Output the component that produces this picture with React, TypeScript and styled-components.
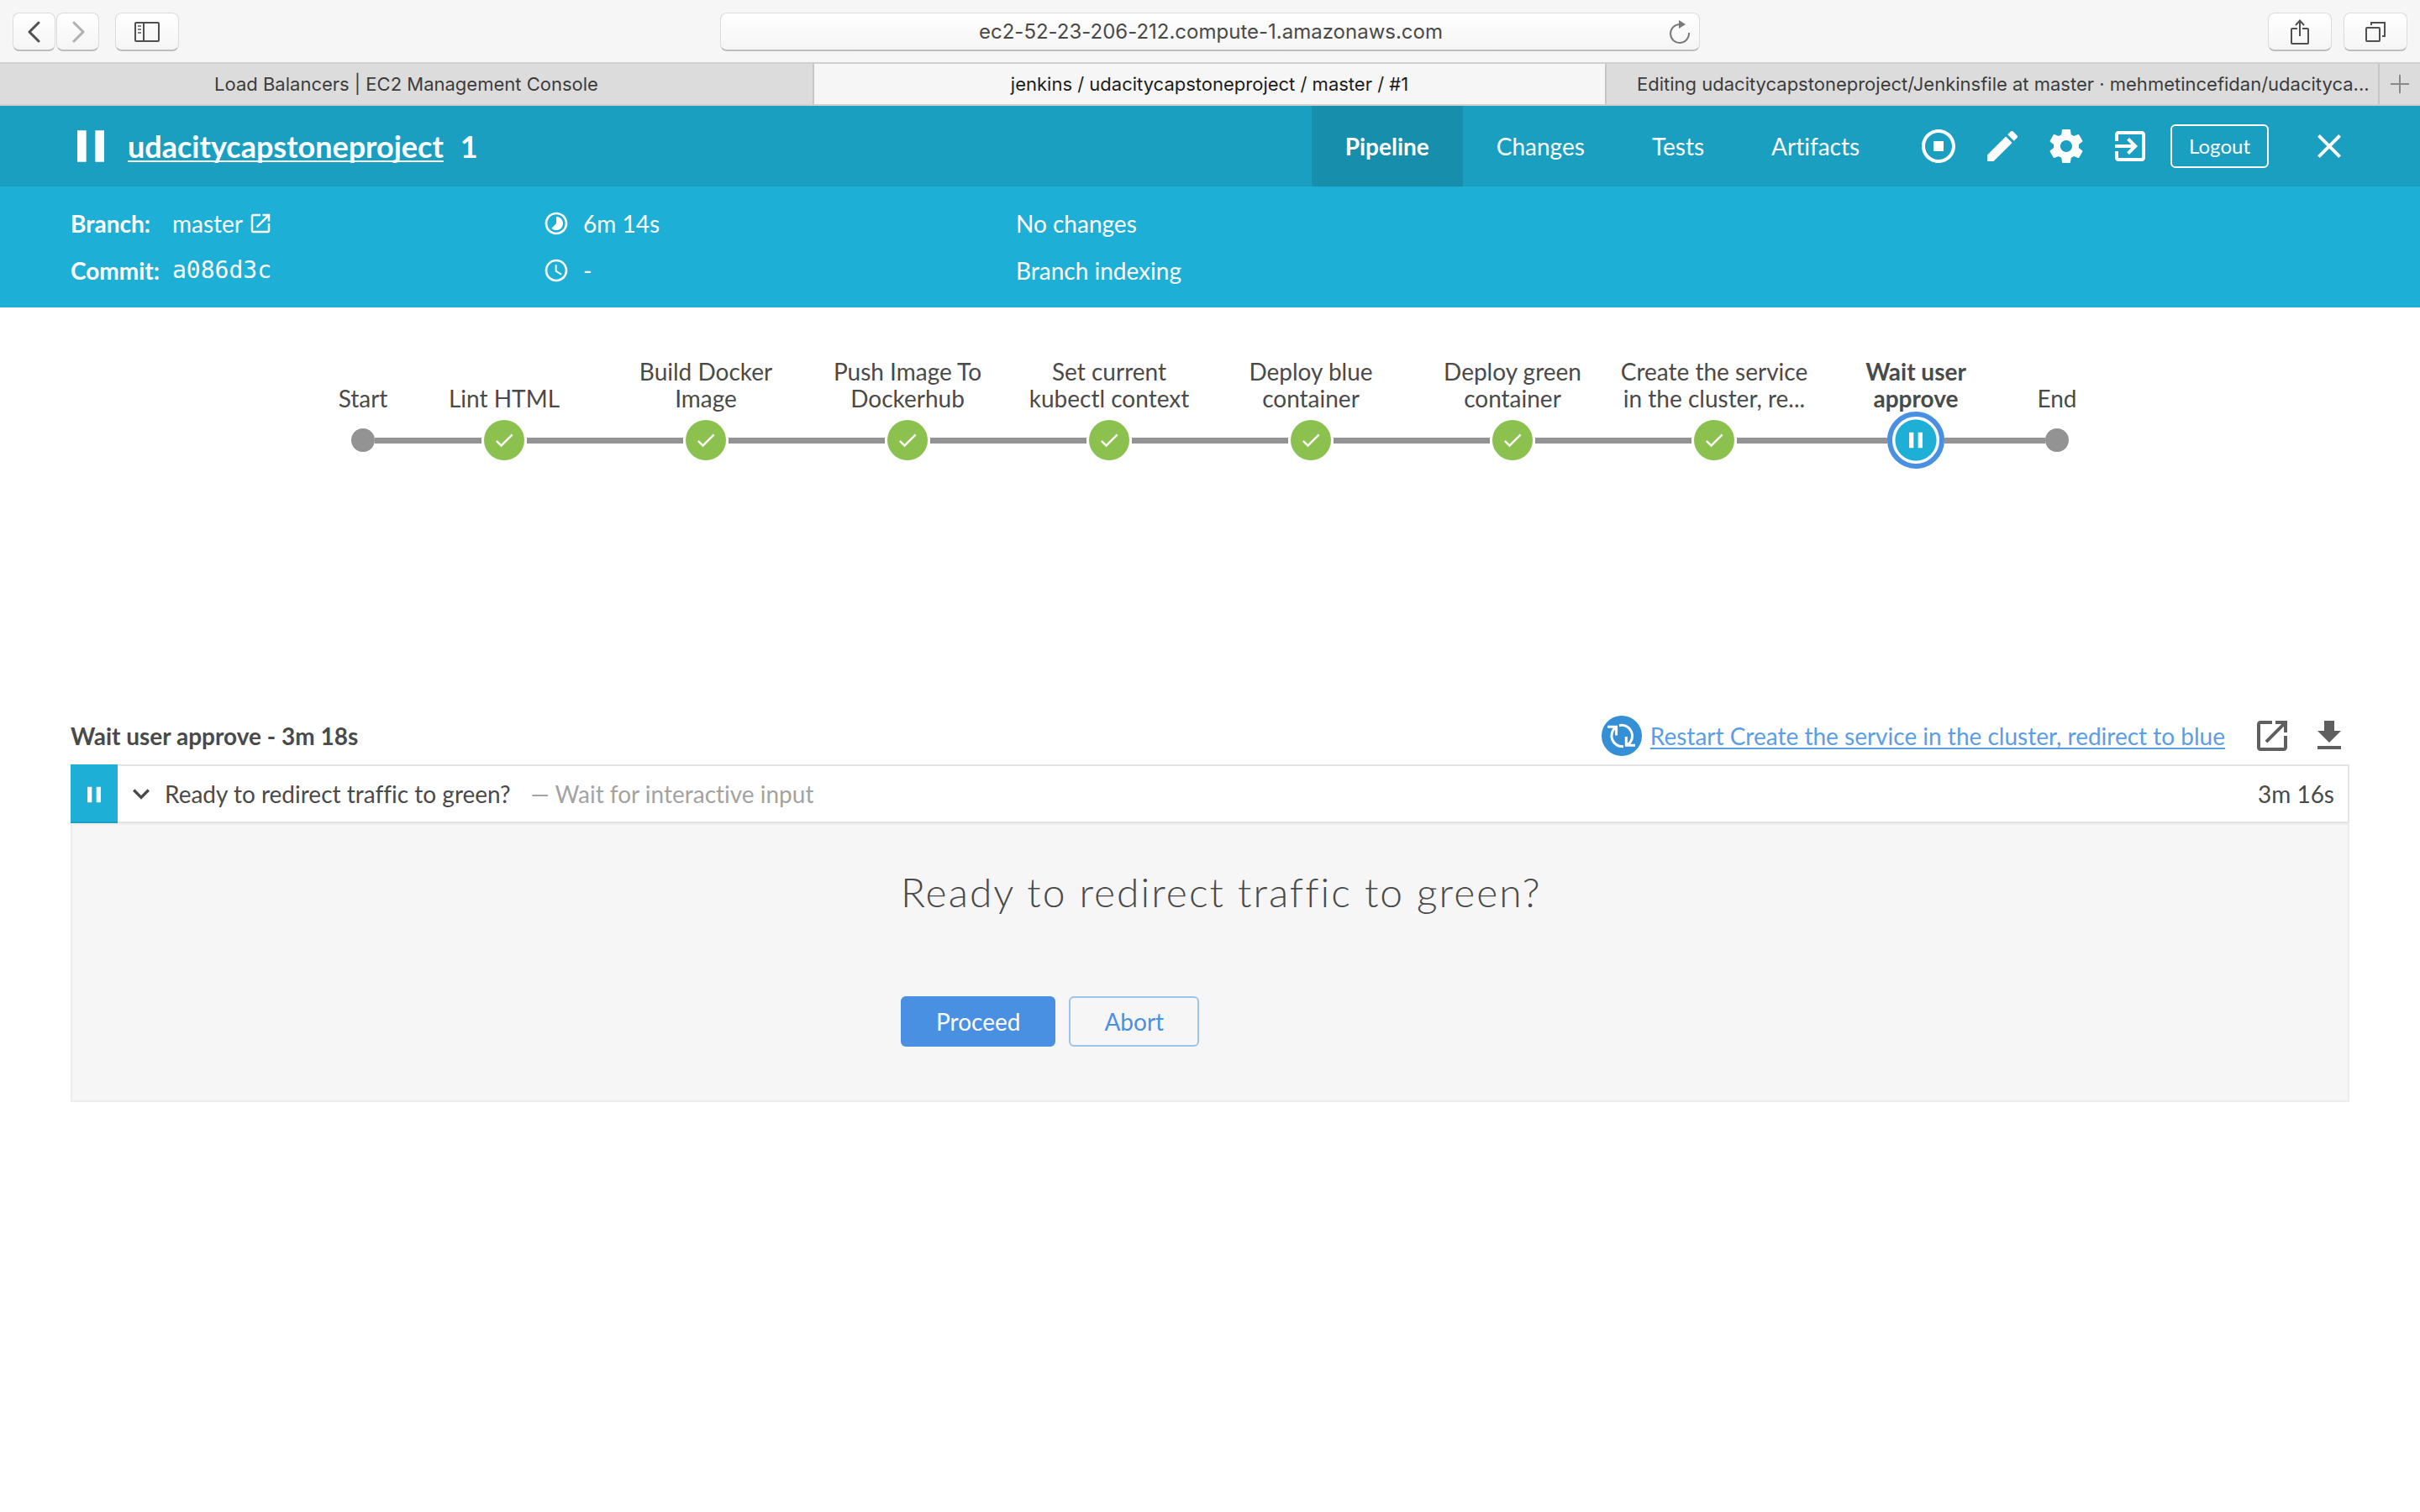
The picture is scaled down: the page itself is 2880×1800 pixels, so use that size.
import React from 'react';
import styled, { createGlobalStyle, css } from 'styled-components';

const ui = '"Lato", "Open Sans", sans-serif';
const system = '"Inter", "Liberation Sans", sans-serif';

const GlobalStyle = createGlobalStyle`
  *, *::before, *::after { box-sizing: border-box; }
  body { margin: 0; background: #fff; color: #4a4a4a; font: 28px/40px ${ui}; font-variant-ligatures: none; }
  button, input { font: inherit; font-variant-ligatures: inherit; color: inherit; margin: 0; }
  svg { display: block; flex: none; }
`;

/* ---------- browser window ---------- */

const Toolbar = styled.div`
  display: grid;
  grid-template-columns: 1fr minmax(400px, 1166px) 1fr;
  align-items: center;
  height: 76px;
  padding: 2px 15px 0;
  background: #f6f6f6;
  border-bottom: 2px solid #d0d0d0;
  font-family: ${system};
`;

const ToolGroup = styled.div<{ $end?: boolean }>`
  display: flex;
  align-items: center;
  justify-content: ${(p) => (p.$end ? 'flex-end' : 'flex-start')};
  gap: ${(p) => (p.$end ? '14px' : '19px')};
`;

const NavPair = styled.div`
  display: flex;
  gap: 1px;
`;

const chromeSurface = css`
  height: 46px;
  border: 1px solid #dcdcdc;
  border-bottom: 2px solid #bdbdbd;
  border-radius: 8px;
  background: linear-gradient(#fff, #f5f5f5);
`;

const ToolButton = styled.button<{ $wide?: boolean; $muted?: boolean }>`
  ${chromeSurface}
  display: flex;
  align-items: center;
  justify-content: center;
  width: ${(p) => (p.$wide ? '76px' : '51px')};
  padding: 0;
  color: ${(p) => (p.$muted ? '#b0b0b0' : '#4f4f4f')};
`;

const AddressBar = styled.div`
  ${chromeSurface}
  display: flex;
  align-items: center;
  padding: 0 10px 0 38px;
`;

const AddressInput = styled.input`
  flex: 1;
  min-width: 0;
  border: 0;
  padding: 0;
  background: none;
  color: #4a4a4a;
  font-size: 24px;
  line-height: 32px;
  text-align: center;
`;

const ReloadButton = styled.button`
  display: flex;
  padding: 0;
  border: 0;
  background: none;
  color: #7a7a7a;
`;

const TabStrip = styled.div`
  display: grid;
  grid-template-columns: 967fr 943fr 920fr 50px;
  height: 50px;
  background: #dcdcdc;
  border-bottom: 2px solid #cfcfcf;
  font: 22px/32px ${system};
`;

const WindowTab = styled.button<{ $active?: boolean; $long?: boolean }>`
  min-width: 0;
  overflow: hidden;
  text-overflow: ellipsis;
  white-space: nowrap;
  border: 0;
  border-left: 2px solid #c6c6c6;
  padding: ${(p) => (p.$long ? '0 4px 0 36px' : '0 20px')};
  text-align: ${(p) => (p.$long ? 'left' : 'center')};
  background: ${(p) => (p.$active ? '#f6f6f6' : 'transparent')};
  color: ${(p) => (p.$active ? '#1c1c1c' : '#3c3c3c')};
  &:first-child { border-left: 0; }
`;

const NewTab = styled.button`
  display: flex;
  align-items: center;
  justify-content: center;
  border: 0;
  border-left: 2px solid #c6c6c6;
  padding: 0;
  background: none;
  color: #8a8a8a;
`;

/* ---------- run header ---------- */

const Header = styled.header`
  display: flex;
  align-items: center;
  height: 96px;
  padding: 0 84px 0 76px;
  background: #1a9fc1;
  color: #fff;
`;

const Title = styled.h1`
  display: flex;
  gap: 20px;
  margin: 0 auto 0 12px;
  font-size: 36px;
  line-height: 48px;
  font-weight: 700;
`;

const TitleLink = styled.a`
  color: inherit;
  text-decoration: underline;
  text-decoration-thickness: 2px;
  text-underline-offset: 3px;
  text-decoration-skip-ink: none;
`;

const Tabs = styled.nav`
  display: flex;
  align-self: stretch;
`;

const Tab = styled.a<{ $active?: boolean }>`
  display: flex;
  align-items: center;
  padding: 0 40px;
  color: inherit;
  text-decoration: none;
  font-weight: ${(p) => (p.$active ? 700 : 400)};
  background: ${(p) => (p.$active ? '#178eac' : 'transparent')};
`;

const HeaderActions = styled.div`
  display: flex;
  align-items: center;
  gap: 28px;
  margin-left: 30px;
`;

const IconButton = styled.button`
  display: flex;
  border: 0;
  padding: 0;
  background: none;
`;

const LogoutButton = styled.button`
  height: 52px;
  margin: 0 48px 0 24px;
  padding: 0 20px;
  border: 2px solid #fff;
  border-radius: 6px;
  background: none;
  font-size: 24px;
  line-height: 32px;
`;

const Info = styled.section`
  display: grid;
  grid-template-columns: 562px 563px 1fr;
  grid-auto-rows: 56px;
  align-items: center;
  height: 144px;
  padding: 16px 84px;
  background: #1eafd6;
  color: #fff;
`;

const InfoItem = styled.div`
  display: flex;
  align-items: center;
  gap: 16px;
`;

const InfoLabel = styled.span`
  width: 105px;
  font-weight: 700;
`;

const BranchLink = styled.a`
  display: flex;
  align-items: center;
  gap: 6px;
  color: inherit;
  text-decoration: none;
`;

const Commit = styled.code`
  font-family: "DejaVu Sans Mono", "Liberation Mono", monospace;
  font-size: 28px;
`;

/* ---------- pipeline graph ---------- */

const Graph = styled.ol`
  display: flex;
  justify-content: center;
  min-height: 470px;
  margin: 0;
  padding: 60px 0 0;
  list-style: none;
`;

const Stage = styled.li<{ $terminal?: boolean }>`
  display: flex;
  flex-direction: column;
  align-items: center;
  width: ${(p) => (p.$terminal ? '96px' : '240px')};
`;

const StageLabel = styled.div<{ $selected?: boolean }>`
  display: flex;
  align-items: flex-end;
  justify-content: center;
  height: 64px;
  line-height: 32px;
  text-align: center;
  white-space: pre-line;
  font-weight: ${(p) => (p.$selected ? 700 : 400)};
`;

const Track = styled.div`
  display: flex;
  align-items: center;
  align-self: stretch;
  height: 68px;
`;

const Rail = styled.span<{ $hidden?: boolean }>`
  flex: 1;
  height: 7px;
  background: ${(p) => (p.$hidden ? 'transparent' : '#949393')};
`;

const nodeLook = {
  terminal: css`width: 28px; height: 28px; background: #949393;`,
  success: css`width: 48px; height: 48px; margin: 0 3px; background: #8cc04f;`,
  paused: css`width: 68px; height: 68px; border: 6px solid #4a90e2; background: radial-gradient(circle, #1eafd6 24px, #fff 25px);`,
};

type Kind = keyof typeof nodeLook;

const Node = styled.button<{ $kind: Kind }>`
  display: flex;
  align-items: center;
  justify-content: center;
  flex: none;
  border: 0;
  border-radius: 50%;
  padding: 0;
  color: #fff;
  ${(p) => nodeLook[p.$kind]}
`;

/* ---------- steps ---------- */

const Steps = styled.section`
  padding: 0 84px;
`;

const StepsHeader = styled.div`
  display: flex;
  align-items: center;
  height: 68px;
  margin-top: 6px;
`;

const StepsTitle = styled.h2`
  margin: 0 auto 0 0;
  font-size: 28px;
  line-height: 40px;
  font-weight: 700;
`;

const RestartBadge = styled.span`
  display: flex;
  align-items: center;
  justify-content: center;
  width: 48px;
  height: 48px;
  border-radius: 50%;
  background: #348fd6;
  color: #fff;
`;

const RestartLink = styled.a`
  display: flex;
  align-items: center;
  gap: 10px;
  margin-right: 32px;
  color: #5a9ee6;
  text-decoration: underline;
  text-decoration-thickness: 2px;
  text-underline-offset: 3px;
  text-decoration-skip-ink: none;
`;

const LogActions = styled.div`
  display: flex;
  gap: 20px;
  color: #5f5f5f;
`;

const StepRow = styled.div`
  display: flex;
  align-items: center;
  height: 70px;
  border: 2px solid #e4e4e4;
  border-left: 0;
  padding-right: 16px;
`;

const StepStatus = styled.span`
  display: flex;
  align-items: center;
  justify-content: center;
  width: 56px;
  height: 70px;
  padding-top: 4px;
  border-bottom: 2px solid #1a9fc1;
  background: #1eafd6;
  color: #fff;
`;

const StepToggle = styled.button`
  display: flex;
  align-items: center;
  gap: 8px;
  border: 0;
  padding: 0 0 0 8px;
  background: none;
`;

const StepKind = styled.span`
  margin-left: 24px;
  color: #a3a3a3;
`;

const StepTime = styled.span`
  margin-left: auto;
`;

const StepBody = styled.div`
  display: flex;
  justify-content: center;
  border: 2px solid #ededed;
  background: #f6f6f6;
`;

const InputForm = styled.form`
  width: 736px;
  max-width: 100%;
  flex: none;
  padding: 48px 0 64px;
`;

const Question = styled.h3`
  margin: 0 0 92px;
  color: #4a4a4a;
  font-size: 48px;
  line-height: 64px;
  font-weight: 300;
  letter-spacing: 2px;
  white-space: nowrap;
`;

const FormActions = styled.div`
  display: flex;
  gap: 16px;
`;

const FormButton = styled.button<{ $primary?: boolean }>`
  height: 60px;
  border: 2px solid ${(p) => (p.$primary ? '#4a90e2' : '#9dc4ef')};
  border-radius: 6px;
  padding: 0 40px;
  background: ${(p) => (p.$primary ? '#4a90e2' : 'transparent')};
  color: ${(p) => (p.$primary ? '#fff' : '#4a90e2')};
`;

/* ---------- icons ---------- */

const paths = {
  pause: 'M6 19h4V5H6v14zm8-14v14h4V5h-4z',
  stop: 'M12 2C6.48 2 2 6.48 2 12s4.48 10 10 10 10-4.48 10-10S17.52 2 12 2zm0 18c-4.41 0-8-3.59-8-8s3.59-8 8-8 8 3.59 8 8-3.59 8-8 8zM9 9h6v6H9z',
  edit: 'M3 17.25V21h3.75L17.81 9.94l-3.75-3.75L3 17.25zM20.71 7.04c.39-.39.39-1.02 0-1.41l-2.34-2.34c-.39-.39-1.02-.39-1.41 0l-1.83 1.83 3.75 3.75 1.83-1.83z',
  gear: 'M19.43 12.98c.04-.32.07-.64.07-.98s-.03-.66-.07-.98l2.11-1.65c.19-.15.24-.42.12-.64l-2-3.46c-.12-.22-.39-.3-.61-.22l-2.49 1c-.52-.4-1.08-.73-1.69-.98l-.38-2.65C14.46 2.18 14.25 2 14 2h-4c-.25 0-.46.18-.49.42l-.38 2.65c-.61.25-1.17.59-1.69.98l-2.49-1c-.23-.09-.49 0-.61.22l-2 3.46c-.13.22-.07.49.12.64l2.11 1.65c-.04.32-.07.65-.07.98s.03.66.07.98l-2.11 1.65c-.19.15-.24.42-.12.64l2 3.46c.12.22.39.3.61.22l2.49-1c.52.4 1.08.73 1.69.98l.38 2.65c.03.24.24.42.49.42h4c.25 0 .46-.18.49-.42l.38-2.65c.61-.25 1.17-.59 1.69-.98l2.49 1c.23.09.49 0 .61-.22l2-3.46c.12-.22.07-.49-.12-.64l-2.11-1.65zM12 15.5c-1.93 0-3.5-1.57-3.5-3.5s1.57-3.5 3.5-3.5 3.5 1.57 3.5 3.5-1.57 3.5-3.5 3.5z',
  exit: 'M10.09 15.59L11.5 17l5-5-5-5-1.41 1.41L12.67 11H3v2h9.67l-2.58 2.59zM19 3H5c-1.11 0-2 .9-2 2v4h2V5h14v14H5v-4H3v4c0 1.1.89 2 2 2h14c1.1 0 2-.9 2-2V5c0-1.1-.9-2-2-2z',
  close: 'M19 6.41L17.59 5 12 10.59 6.41 5 5 6.41 10.59 12 5 17.59 6.41 19 12 13.41 17.59 19 19 17.59 13.41 12z',
  open: 'M19 19H5V5h7V3H5c-1.11 0-2 .9-2 2v14c0 1.1.89 2 2 2h14c1.1 0 2-.9 2-2v-7h-2v7zM14 3v2h3.59l-9.83 9.83 1.41 1.41L19 6.41V10h2V3h-7z',
  timelapse: 'M16.24 7.76C15.07 6.59 13.54 6 12 6v6l-4.24 4.24c2.34 2.34 6.14 2.34 8.49 0 2.34-2.34 2.34-6.14-.01-8.48zM12 2C6.48 2 2 6.48 2 12s4.48 10 10 10 10-4.48 10-10S17.52 2 12 2zm0 18c-4.42 0-8-3.58-8-8s3.58-8 8-8 8 3.58 8 8-3.58 8-8 8z',
  clock: 'M11.99 2C6.47 2 2 6.48 2 12s4.47 10 9.99 10C17.52 22 22 17.52 22 12S17.52 2 11.99 2zM12 20c-4.42 0-8-3.58-8-8s3.58-8 8-8 8 3.58 8 8-3.58 8-8 8zm.5-13H11v6l5.25 3.15.75-1.23-4.5-2.67z',
  download: 'M19 9h-4V3H9v6H5l7 7 7-7zM5 18v2h14v-2H5z',
  check: 'M9 16.17L4.83 12l-1.42 1.41L9 19 21 7l-1.41-1.41z',
  expand: 'M16.59 8.59L12 13.17 7.41 8.59 6 10l6 6 6-6z',
};

const Icon = ({ name, size = 48 }: { name: keyof typeof paths; size?: number }) => (
  <svg width={size} height={size} viewBox="0 0 24 24" fill="currentColor" aria-hidden="true">
    <path d={paths[name]} />
  </svg>
);

const Chevron = ({ flip }: { flip?: boolean }) => (
  <svg width="16" height="26" viewBox="0 0 16 26" fill="none" stroke="currentColor" strokeWidth="3" strokeLinecap="round" strokeLinejoin="round" aria-hidden="true">
    <path d={flip ? 'M3 2l11 11L3 24' : 'M13 2L2 13l11 11'} />
  </svg>
);

const SidebarIcon = () => (
  <svg width="30" height="24" viewBox="0 0 30 24" fill="none" stroke="currentColor" strokeWidth="2" aria-hidden="true">
    <rect x="1" y="1" width="28" height="22" rx="1" />
    <path d="M11 1v22" />
    <path d="M4 5h4M4 9h4M4 13h4" opacity="0.7" />
  </svg>
);

const ReloadIcon = () => (
  <svg width="26" height="28" viewBox="0 0 26 28" fill="none" stroke="currentColor" strokeWidth="2" aria-hidden="true">
    <path d="M24 15a11 11 0 1 1-11-10" />
    <path d="M12 0l8 5-8 5z" fill="currentColor" stroke="none" />
  </svg>
);

const ShareIcon = () => (
  <svg width="22" height="32" viewBox="0 0 22 32" fill="none" stroke="currentColor" strokeWidth="2" aria-hidden="true">
    <path d="M8 12H2q-1 0-1 1v16q0 1 1 1h18q1 0 1-1V13q0-1-1-1h-6M11 21V2.500M6 8l5-5.500 5 5.500" />
  </svg>
);

const OverviewIcon = () => (
  <svg width="24" height="24" viewBox="0 0 24 24" fill="none" stroke="currentColor" strokeWidth="2" aria-hidden="true">
    <rect x="1" y="7" width="16" height="16" rx="1" />
    <path d="M7 4V1h16v16h-3" />
  </svg>
);

const PlusIcon = () => (
  <svg width="22" height="22" viewBox="0 0 22 22" stroke="currentColor" strokeWidth="2" aria-hidden="true">
    <path d="M11 0v22M0 11h22" />
  </svg>
);

const RestartIcon = () => (
  <svg width="34" height="34" viewBox="-1 -1 34 34" fill="none" stroke="currentColor" strokeWidth="3" aria-hidden="true">
    <path d="M-1 5.300H9.600V15.500M9 5.800A12.700 12.700 0 0 0 18 28.600" />
    <path d="M32 27.200H21.300V17M23 26.600A12.700 12.700 0 0 0 13 3.700" />
  </svg>
);

/* ---------- page ---------- */

const stages: { label: string; kind: Kind }[] = [
  { label: 'Start', kind: 'terminal' },
  { label: 'Lint HTML', kind: 'success' },
  { label: 'Build Docker\nImage', kind: 'success' },
  { label: 'Push Image To\nDockerhub', kind: 'success' },
  { label: 'Set current\nkubectl context', kind: 'success' },
  { label: 'Deploy blue\ncontainer', kind: 'success' },
  { label: 'Deploy green\ncontainer', kind: 'success' },
  { label: 'Create the service\nin the cluster, re...', kind: 'success' },
  { label: 'Wait user\napprove', kind: 'paused' },
  { label: 'End', kind: 'terminal' },
];

export default function App() {
  return (
    <>
      <GlobalStyle />
      <Toolbar>
        <ToolGroup>
          <NavPair>
            <ToolButton aria-label="Back"><Chevron /></ToolButton>
            <ToolButton aria-label="Forward" $muted><Chevron flip /></ToolButton>
          </NavPair>
          <ToolButton aria-label="Show sidebar" $wide><SidebarIcon /></ToolButton>
        </ToolGroup>
        <AddressBar>
          <AddressInput aria-label="Address" defaultValue="ec2-52-23-206-212.compute-1.amazonaws.com" />
          <ReloadButton aria-label="Reload"><ReloadIcon /></ReloadButton>
        </AddressBar>
        <ToolGroup $end>
          <ToolButton aria-label="Share" $wide><ShareIcon /></ToolButton>
          <ToolButton aria-label="Tab overview" $wide><OverviewIcon /></ToolButton>
        </ToolGroup>
      </Toolbar>
      <TabStrip>
        <WindowTab>Load Balancers | EC2 Management Console</WindowTab>
        <WindowTab $active>jenkins / udacitycapstoneproject / master / #1</WindowTab>
        <WindowTab $long>Editing udacitycapstoneproject/Jenkinsfile at master · mehmetincefidan/udacityca...</WindowTab>
        <NewTab aria-label="New tab"><PlusIcon /></NewTab>
      </TabStrip>

      <Header>
        <Icon name="pause" size={64} />
        <Title>
          <TitleLink href="#project">udacitycapstoneproject</TitleLink>
          <span>1</span>
        </Title>
        <Tabs>
          <Tab href="#pipeline" $active>Pipeline</Tab>
          <Tab href="#changes">Changes</Tab>
          <Tab href="#tests">Tests</Tab>
          <Tab href="#artifacts">Artifacts</Tab>
        </Tabs>
        <HeaderActions>
          <IconButton aria-label="Stop"><Icon name="stop" /></IconButton>
          <IconButton aria-label="Edit"><Icon name="edit" /></IconButton>
          <IconButton aria-label="Settings"><Icon name="gear" /></IconButton>
          <IconButton aria-label="Go to classic"><Icon name="exit" /></IconButton>
        </HeaderActions>
        <LogoutButton>Logout</LogoutButton>
        <IconButton aria-label="Close"><Icon name="close" /></IconButton>
      </Header>
      <Info>
        <InfoItem>
          <InfoLabel>Branch:</InfoLabel>
          <BranchLink href="#master">master <Icon name="open" size={30} /></BranchLink>
        </InfoItem>
        <InfoItem><Icon name="timelapse" size={32} />6m 14s</InfoItem>
        <InfoItem>No changes</InfoItem>
        <InfoItem>
          <InfoLabel>Commit:</InfoLabel>
          <Commit>a086d3c</Commit>
        </InfoItem>
        <InfoItem><Icon name="clock" size={32} />-</InfoItem>
        <InfoItem>Branch indexing</InfoItem>
      </Info>

      <Graph>
        {stages.map((stage, i) => (
          <Stage key={stage.label} $terminal={stage.kind === 'terminal'}>
            <StageLabel $selected={stage.kind === 'paused'}>{stage.label}</StageLabel>
            <Track>
              <Rail $hidden={i === 0} />
              <Node $kind={stage.kind} aria-label={stage.label}>
                {stage.kind === 'success' && <Icon name="check" size={28} />}
                {stage.kind === 'paused' && <Icon name="pause" size={32} />}
              </Node>
              <Rail $hidden={i === stages.length - 1} />
            </Track>
          </Stage>
        ))}
      </Graph>

      <Steps>
        <StepsHeader>
          <StepsTitle>Wait user approve - 3m 18s</StepsTitle>
          <RestartLink href="#restart">
            <RestartBadge><RestartIcon /></RestartBadge>
            Restart Create the service in the cluster, redirect to blue
          </RestartLink>
          <LogActions>
            <IconButton aria-label="Open log"><Icon name="open" /></IconButton>
            <IconButton aria-label="Download log"><Icon name="download" /></IconButton>
          </LogActions>
        </StepsHeader>
        <StepRow>
          <StepStatus><Icon name="pause" size={32} /></StepStatus>
          <StepToggle>
            <Icon name="expand" size={40} />
            Ready to redirect traffic to green?
          </StepToggle>
          <StepKind>— Wait for interactive input</StepKind>
          <StepTime>3m 16s</StepTime>
        </StepRow>
        <StepBody>
          <InputForm onSubmit={(e: React.FormEvent) => e.preventDefault()}>
            <Question>Ready to redirect traffic to green?</Question>
            <FormActions>
              <FormButton type="submit" $primary>Proceed</FormButton>
              <FormButton type="button">Abort</FormButton>
            </FormActions>
          </InputForm>
        </StepBody>
      </Steps>
    </>
  );
}
